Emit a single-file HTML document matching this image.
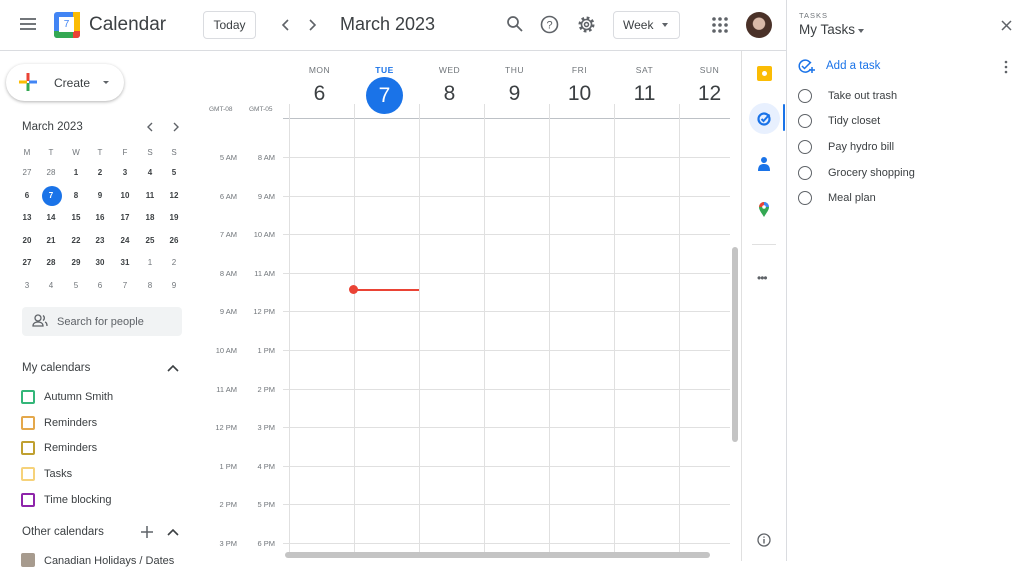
<!DOCTYPE html><html><head><style>
*{box-sizing:border-box;margin:0;padding:0}
body{width:1024px;height:561px;overflow:hidden;background:#fff;font-family:"Liberation Sans",Arial,sans-serif;color:#3c4043;position:relative}
.a{position:absolute}
.mc{position:absolute;width:20px;text-align:center;font-size:8px;font-weight:bold;color:#3c4043}
.g{color:#70757a;font-weight:normal}
.hl{position:absolute;left:283px;width:447px;height:1px;background:#e0e0e0}
.vl{position:absolute;top:104px;width:1px;height:450px;background:#e0e0e0}
.tl{position:absolute;font-size:7.5px;color:#70757a;text-align:right;width:32px}
.dn{position:absolute;width:65px;text-align:center;font-size:8.5px;color:#70757a;top:65px;letter-spacing:.5px}
.dd{position:absolute;width:65px;text-align:center;font-size:21px;color:#3c4043;top:82px}
.cb{position:absolute;left:21px;width:14px;height:14px;border:2px solid;border-radius:2px}
.cl{position:absolute;left:44px;font-size:11px;color:#3c4043}
.task{position:absolute;left:828px;font-size:11px;color:#3c4043}
.rc{position:absolute;left:798px;width:14px;height:14px;border:1.5px solid #5f6368;border-radius:50%}
</style></head><body>
<div class="a" style="left:0;top:50px;width:786px;height:1px;background:#dadce0"></div>
<svg class="a" style="left:20px;top:17px" width="16" height="14"><path d="M0 2h16M0 7h16M0 12h16" stroke="#5f6368" stroke-width="1.8"/></svg>
<div class="a" style="left:54px;top:12px;width:26px;height:26px;border-radius:3px;background:#4285f4"></div>
<div class="a" style="left:54px;top:31px;width:20px;height:7px;background:#34a853;border-radius:0 0 0 3px"></div>
<div class="a" style="left:73px;top:12px;width:7px;height:20px;background:#fbbc04"></div>
<div class="a" style="left:73px;top:31px;width:7px;height:7px;background:#ea4335;border-radius:0 0 3px 0"></div>
<div class="a" style="left:59px;top:17px;width:15px;height:15px;background:#fff;font-size:10px;color:#4285f4;text-align:center;line-height:15px">7</div>
<div class="a" style="left:89px;top:14px;font-size:19px;color:#3c4043">Calendar</div>
<div class="a" style="left:203px;top:11px;width:53px;height:28px;border:1px solid #dadce0;border-radius:4px;font-size:12px;text-align:center;line-height:26px">Today</div>
<svg class="a" style="left:279px;top:18px" width="40" height="14"><path d="M9 2L4 7l5 5M31 2l5 5-5 5" stroke="#5f6368" stroke-width="1.6" fill="none"/></svg>
<div class="a" style="left:340px;top:14px;font-size:18px;color:#3c4043">March 2023</div>
<svg class="a" style="left:506px;top:15px" width="18" height="18"><circle cx="7" cy="7" r="5" stroke="#5f6368" stroke-width="1.7" fill="none"/><path d="M11 11l5 5" stroke="#5f6368" stroke-width="1.8"/></svg>
<svg class="a" style="left:540px;top:15px" width="19" height="19"><circle cx="9.5" cy="9.5" r="8" stroke="#5f6368" stroke-width="1.6" fill="none"/><text x="9.5" y="13.5" font-size="11" text-anchor="middle" fill="#5f6368" font-family="Liberation Sans">?</text></svg>
<svg class="a" style="left:577px;top:15px" width="19" height="19"><circle cx="9.5" cy="9.5" r="6.5" stroke="#5f6368" stroke-width="3" stroke-dasharray="2.6 2.5" fill="none"/><circle cx="9.5" cy="9.5" r="5" stroke="#5f6368" stroke-width="1.6" fill="none"/><circle cx="9.5" cy="9.5" r="2" stroke="#5f6368" stroke-width="1.5" fill="none"/></svg>
<div class="a" style="left:613px;top:11px;width:67px;height:28px;border:1px solid #dadce0;border-radius:4px;font-size:12px;line-height:26px;padding-left:9px">Week</div>
<div class="a" style="left:662px;top:23px;border:3.5px solid transparent;border-top:4px solid #5f6368"></div>
<svg class="a" style="left:712px;top:17px" width="16" height="16" fill="#5f6368"><circle cx="2" cy="2" r="1.8"/><circle cx="8" cy="2" r="1.8"/><circle cx="14" cy="2" r="1.8"/><circle cx="2" cy="8" r="1.8"/><circle cx="8" cy="8" r="1.8"/><circle cx="14" cy="8" r="1.8"/><circle cx="2" cy="14" r="1.8"/><circle cx="8" cy="14" r="1.8"/><circle cx="14" cy="14" r="1.8"/></svg>
<div class="a" style="left:746px;top:12px;width:26px;height:26px;border-radius:50%;background:radial-gradient(circle at 50% 45%,#d9b9a8 30%,#4a3128 34%)"></div>
<div class="a" style="left:6px;top:64px;width:118px;height:37px;border-radius:19px;box-shadow:0 1px 3px rgba(0,0,0,.3);background:#fff"></div>
<svg class="a" style="left:18px;top:72px" width="20" height="20"><path d="M10 1v8" stroke="#ea4335" stroke-width="3"/><path d="M10 11v8" stroke="#34a853" stroke-width="3"/><path d="M1 10h8" stroke="#fbbc04" stroke-width="3"/><path d="M11 10h8" stroke="#4285f4" stroke-width="3"/></svg>
<div class="a" style="left:54px;top:76px;font-size:12px">Create</div>
<div class="a" style="left:103px;top:81px;border:3px solid transparent;border-top:3.5px solid #5f6368"></div>
<div class="a" style="left:22px;top:121px;font-size:11.5px">March 2023</div>
<svg class="a" style="left:145px;top:122px" width="36" height="10"><path d="M7 1L3 5l4 4M29 1l4 4-4 4" stroke="#5f6368" stroke-width="1.4" fill="none"/></svg>
<div id="mini"></div>
<div class="a" style="left:42px;top:186px;width:20px;height:20px;border-radius:50%;background:#1a73e8"></div>
<script>
var xs=[17,41,66,90,115,140,164],ys=[173,196,218,241,263,286];
var h="";"MTWTFSS".split("").forEach((d,i)=>h+=`<div class="mc g" style="left:${xs[i]}px;top:148px">${d}</div>`);
var days=[[27,28,1,2,3,4,5],[6,7,8,9,10,11,12],[13,14,15,16,17,18,19],[20,21,22,23,24,25,26],[27,28,29,30,31,1,2],[3,4,5,6,7,8,9]];
days.forEach((r,ri)=>r.forEach((d,i)=>{var g=(ri==0&&i<2)||(ri==4&&i>4)||ri==5;var c=(ri==1&&i==1)?'color:#fff;z-index:2;':'';
h+=`<div class="mc ${g?'g':''}" style="left:${xs[i]}px;top:${ys[ri]-5}px;${c}">${d}</div>`}));
document.getElementById('mini').innerHTML=h;
</script>
<div class="a" style="left:22px;top:307px;width:160px;height:29px;background:#f1f3f4;border-radius:4px"></div>
<svg class="a" style="left:32px;top:314px" width="16" height="14"><circle cx="6" cy="4" r="3" stroke="#5f6368" stroke-width="1.3" fill="none"/><path d="M1 12c0-3 2.5-4 5-4s5 1 5 4zM11 1.5a3 3 0 010 5M13 8c1.5.5 2 2 2 4" stroke="#5f6368" stroke-width="1.3" fill="none"/></svg>
<div class="a" style="left:57px;top:316px;font-size:11px;color:#5f6368">Search for people</div>
<div class="a" style="left:22px;top:362px;font-size:11.5px">My calendars</div>
<svg class="a" style="left:167px;top:364px" width="12" height="8"><path d="M1 7l5-5 5 5" stroke="#3c4043" stroke-width="1.6" fill="none"/></svg>
<div class="cb" style="top:390px;border-color:#33b679"></div><div class="cl" style="top:391px">Autumn Smith</div>
<div class="cb" style="top:416px;border-color:#e4a84b"></div><div class="cl" style="top:417px">Reminders</div>
<div class="cb" style="top:441px;border-color:#c0a030"></div><div class="cl" style="top:442px">Reminders</div>
<div class="cb" style="top:467px;border-color:#f6d27a"></div><div class="cl" style="top:468px">Tasks</div>
<div class="cb" style="top:493px;border-color:#8e24aa"></div><div class="cl" style="top:494px">Time blocking</div>
<div class="a" style="left:22px;top:526px;font-size:11.5px">Other calendars</div>
<svg class="a" style="left:140px;top:525px" width="40" height="14"><path d="M7 1v12M1 7h12" stroke="#5f6368" stroke-width="1.5"/><path d="M28 10l5-5 5 5" stroke="#3c4043" stroke-width="1.6" fill="none"/></svg>
<div class="a" style="left:21px;top:553px;width:14px;height:14px;background:#a79b8e;border-radius:2px"></div>
<div class="cl" style="top:555px">Canadian Holidays / Dates</div>
<div class="a" style="left:209px;top:106px;font-size:6.5px;color:#70757a">GMT-08</div>
<div class="a" style="left:249px;top:106px;font-size:6.5px;color:#70757a">GMT-05</div>
<div class="a" style="left:283px;top:118px;width:447px;height:1px;background:#bdc1c6"></div>
<div id="grid"></div>
<script>
var g="",cols=[289,354,419,484,549,614,679];
cols.forEach(x=>g+=`<div class="vl" style="left:${x}px"></div>`);
var L=["5 AM","6 AM","7 AM","8 AM","9 AM","10 AM","11 AM","12 PM","1 PM","2 PM","3 PM"],R=["8 AM","9 AM","10 AM","11 AM","12 PM","1 PM","2 PM","3 PM","4 PM","5 PM","6 PM"];
for(var i=0;i<11;i++){var y=157+i*38.6;g+=`<div class="hl" style="top:${y}px"></div><div class="tl" style="left:205px;top:${y-4}px">${L[i]}</div><div class="tl" style="left:243px;top:${y-4}px">${R[i]}</div>`;}
var n=["MON","TUE","WED","THU","FRI","SAT","SUN"],d=[6,7,8,9,10,11,12];
n.forEach((s,i)=>{var x=cols[i]-2;g+=`<div class="dn" style="left:${x}px;${i==1?'color:#1a73e8;font-weight:bold':''}">${s}</div>`;
g+= i==1?`<div class="a" style="left:${x+14}px;top:77px;width:37px;height:37px;border-radius:50%;background:#1a73e8;color:#fff;font-size:21px;text-align:center;line-height:37px">7</div>`:`<div class="dd" style="left:${x}px">${d[i]}</div>`});
document.getElementById('grid').innerHTML=g;
</script>
<div class="a" style="left:354px;top:289px;width:65px;height:1.5px;background:#ea4335"></div>
<div class="a" style="left:349px;top:285px;width:9px;height:9px;border-radius:50%;background:#ea4335"></div>
<div class="a" style="left:732px;top:247px;width:6px;height:195px;border-radius:3px;background:#c4c4c4"></div>
<div class="a" style="left:285px;top:552px;width:425px;height:6px;border-radius:3px;background:#c4c4c4"></div>
<div class="a" style="left:741px;top:51px;width:1px;height:510px;background:#e0e0e0"></div>
<div class="a" style="left:757px;top:66px;width:15px;height:15px;border-radius:2px;background:#fbbc04"></div>
<div class="a" style="left:762px;top:71px;width:5px;height:5px;border-radius:50%;background:#fff"></div>
<div class="a" style="left:749px;top:103px;width:31px;height:31px;border-radius:50%;background:#e8f0fe"></div>
<svg class="a" style="left:757px;top:111px" width="15" height="15"><circle cx="7" cy="8" r="5.5" stroke="#1a73e8" stroke-width="2.2" fill="none"/><path d="M4.5 8l2 2 6-6.5" stroke="#1a73e8" stroke-width="2" fill="none"/></svg>
<div class="a" style="left:783px;top:104px;width:2px;height:27px;background:#1a73e8;border-radius:1px"></div>
<svg class="a" style="left:758px;top:156px" width="12" height="16"><circle cx="6" cy="4" r="3" fill="#1a73e8"/><path d="M0 15c0-5 2-7 6-7s6 2 6 7z" fill="#1a73e8"/></svg>
<svg class="a" style="left:758px;top:201px" width="12" height="16"><path d="M6 16C3 11 1 9 1 6a5 5 0 0110 0c0 3-2 5-5 10z" fill="#34a853"/><path d="M1 6a5 5 0 015-5l0 5z" fill="#ea4335"/><path d="M11 6a5 5 0 00-5-5v5z" fill="#4285f4"/><circle cx="6" cy="6" r="1.8" fill="#fff"/></svg>
<div class="a" style="left:752px;top:244px;width:24px;height:1px;background:#e0e0e0"></div>
<div class="a" style="left:757px;top:271px;font-size:12px;color:#5f6368;letter-spacing:-1px">•••</div>
<svg class="a" style="left:757px;top:533px" width="14" height="14"><circle cx="7" cy="7" r="6" stroke="#5f6368" stroke-width="1.3" fill="none"/><path d="M7 6v4.5M7 3.5v1.3" stroke="#5f6368" stroke-width="1.4"/></svg>
<div class="a" style="left:786px;top:0;width:1px;height:561px;background:#dadce0"></div>
<div class="a" style="left:799px;top:11px;font-size:7.5px;color:#70757a;letter-spacing:1px">TASKS</div>
<div class="a" style="left:799px;top:22px;font-size:13.5px;color:#3c4043">My Tasks</div>
<div class="a" style="left:858px;top:29px;border:3.5px solid transparent;border-top:4px solid #5f6368"></div>
<svg class="a" style="left:1001px;top:20px" width="11" height="11"><path d="M1 1l9 9M10 1l-9 9" stroke="#5f6368" stroke-width="1.5"/></svg>
<svg class="a" style="left:798px;top:59px" width="17" height="15"><path d="M12 3.5A6 6 0 1 0 12.5 10" stroke="#1a73e8" stroke-width="1.5" fill="none"/><path d="M4 7l2.5 2.5L13 3" stroke="#1a73e8" stroke-width="1.5" fill="none"/><path d="M14 8v6M11 11h6" stroke="#1a73e8" stroke-width="1.5"/></svg>
<div class="a" style="left:826px;top:60px;font-size:11.5px;color:#1a73e8">Add a task</div>
<svg class="a" style="left:1004px;top:60px" width="4" height="14" fill="#5f6368"><circle cx="2" cy="2" r="1.3"/><circle cx="2" cy="7" r="1.3"/><circle cx="2" cy="12" r="1.3"/></svg>
<div class="rc" style="top:89px"></div><div class="task" style="top:90px">Take out trash</div>
<div class="rc" style="top:114px"></div><div class="task" style="top:115px">Tidy closet</div>
<div class="rc" style="top:140px"></div><div class="task" style="top:141px">Pay hydro bill</div>
<div class="rc" style="top:166px"></div><div class="task" style="top:167px">Grocery shopping</div>
<div class="rc" style="top:191px"></div><div class="task" style="top:192px">Meal plan</div>
</body></html>
